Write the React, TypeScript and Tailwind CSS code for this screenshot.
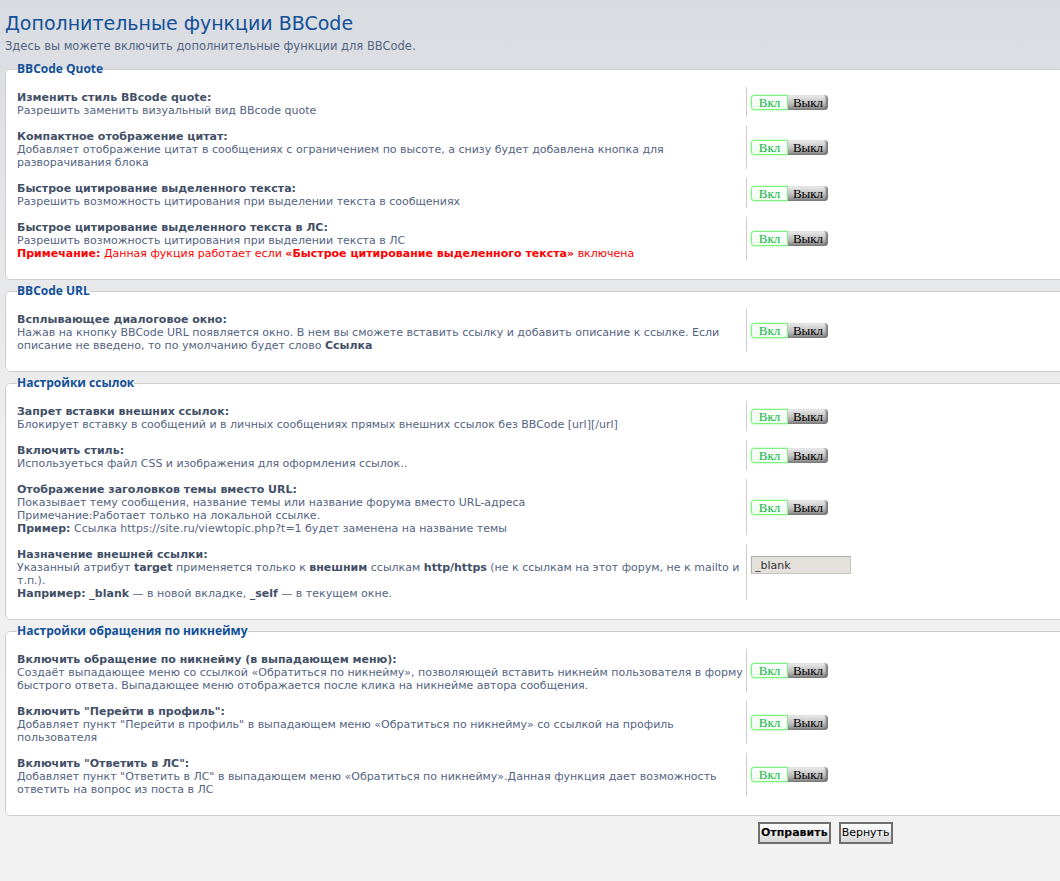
import React from "react";

type Row = {
  title: React.ReactNode;
  desc: React.ReactNode;
  control?: "toggle" | "input";
};

function Toggle() {
  return (
    <div className="flex h-[15px] font-['Liberation_Serif',serif] text-[13px] leading-[13px]">
      <span className="flex w-[37px] items-center justify-center rounded-l-[3px] border border-[#80f080] bg-gradient-to-b from-white to-[#eefff0] text-[#12b545] shadow-[0_0_2px_#6ef56e]">
        Вкл
      </span>
      <span className="flex w-[40px] items-center justify-center rounded-r-[4px] bg-gradient-to-b from-[#ededed] via-[#c4c4c4] to-[#858585] text-black shadow-[inset_-2px_-1px_2px_#777]">
        Выкл
      </span>
    </div>
  );
}

function Section({ legend, rows }: { legend: string; rows: Row[] }) {
  return (
    <fieldset className="mb-[4px] rounded-[5px] border border-[#cccccc] bg-white px-[11px] pt-[11px] pb-[10px]">
      <legend className="font-['Open_Sans',sans-serif] text-[12px] leading-[14px] font-bold text-[#115098]">
        {legend}
      </legend>
      {rows.map((r, i) => (
        <div key={i} className="mb-[9px] flex">
          <div className="w-[729px] pt-[4px] text-[11px] leading-[13px] text-[#536482]">
            <div className="font-bold text-[#425067]">{r.title}</div>
            <div>{r.desc}</div>
          </div>
          <div className="flex items-center border-l border-[#cccccc] pl-[4px]">
            {r.control === "input" ? (
              <input
                readOnly
                value="_blank"
                className="mb-[14px] h-[18px] w-[100px] border border-[#c7c4bd] border-t-[#b3b0a9] border-l-[#b3b0a9] bg-[#e4e0da] px-[3px] text-[11px] text-[#333]"
              />
            ) : (
              <Toggle />
            )}
          </div>
        </div>
      ))}
    </fieldset>
  );
}

export default function App() {
  const quote: Row[] = [
    { title: "Изменить стиль BBcode quote:", desc: "Разрешить заменить визуальный вид BBcode quote" },
    {
      title: "Компактное отображение цитат:",
      desc: "Добавляет отображение цитат в сообщениях с ограничением по высоте, а снизу будет добавлена кнопка для разворачивания блока",
    },
    { title: "Быстрое цитирование выделенного текста:", desc: "Разрешить возможность цитирования при выделении текста в сообщениях" },
    {
      title: "Быстрое цитирование выделенного текста в ЛС:",
      desc: (
        <>
          Разрешить возможность цитирования при выделении текста в ЛС
          <br />
          <span className="text-[#ff0000]">
            <b>Примечание:</b> Данная фукция работает если <b>«Быстрое цитирование выделенного текста»</b> включена
          </span>
        </>
      ),
    },
  ];

  const url: Row[] = [
    {
      title: "Всплывающее диалоговое окно:",
      desc: (
        <>
          Нажав на кнопку BBCode URL появляется окно. В нем вы сможете вставить ссылку и добавить описание к ссылке. Если
          описание не введено, то по умолчанию будет слово <b className="text-[#425067]">Ссылка</b>
        </>
      ),
    },
  ];

  const links: Row[] = [
    {
      title: "Запрет вставки внешних ссылок:",
      desc: "Блокирует вставку в сообщений и в личных сообщениях прямых внешних ссылок без BBCode [url][/url]",
    },
    { title: "Включить стиль:", desc: "Используеться файл CSS и изображения для оформления ссылок.." },
    {
      title: "Отображение заголовков темы вместо URL:",
      desc: (
        <>
          Показывает тему сообщения, название темы или название форума вместо URL-адреса
          <br />
          Примечание:Работает только на локальной ссылке.
          <br />
          <b className="text-[#425067]">Пример:</b> Ссылка https://site.ru/viewtopic.php?t=1 будет заменена на название темы
        </>
      ),
    },
    {
      title: "Назначение внешней ссылки:",
      control: "input",
      desc: (
        <>
          Указанный атрибут <b className="text-[#425067]">target</b> применяется только к{" "}
          <b className="text-[#425067]">внешним</b> ссылкам <b className="text-[#425067]">http/https</b> (не к ссылкам на
          этот форум, не к mailto и т.п.).
          <br />
          <b className="text-[#425067]">Например: _blank</b> — в новой вкладке, <b className="text-[#425067]">_self</b> — в
          текущем окне.
        </>
      ),
    },
  ];

  const nick: Row[] = [
    {
      title: "Включить обращение по никнейму (в выпадающем меню):",
      desc: "Создаёт выпадающее меню со ссылкой «Обратиться по никнейму», позволяющей вставить никнейм пользователя в форму быстрого ответа. Выпадающее меню отображается после клика на никнейме автора сообщения.",
    },
    {
      title: 'Включить "Перейти в профиль":',
      desc: 'Добавляет пункт "Перейти в профиль" в выпадающем меню «Обратиться по никнейму» со ссылкой на профиль пользователя',
    },
    {
      title: 'Включить "Ответить в ЛС":',
      desc: 'Добавляет пункт "Ответить в ЛС" в выпадающем меню «Обратиться по никнейму».Данная функция дает возможность ответить на вопрос из поста в ЛС',
    },
  ];

  return (
    <div className="min-h-[881px] overflow-hidden bg-[linear-gradient(to_bottom,#d8dbe0_0px,#e4e5e8_200px,#efefef_450px,#f2f2f2_881px)] font-['DejaVu_Sans',Verdana,sans-serif]">
      <div className="w-[1080px] pl-[5px]">
        <h1 className="pt-[10px] text-[19px] leading-[26px] text-[#115098]">Дополнительные функции BBCode</h1>
        <p className="mt-[2px] mb-[8px] text-[11.5px] leading-[16px] text-[#536482]">
          Здесь вы можете включить дополнительные функции для BBCode.
        </p>
        <Section legend="BBCode Quote" rows={quote} />
        <Section legend="BBCode URL" rows={url} />
        <Section legend="Настройки ссылок" rows={links} />
        <Section legend="Настройки обращения по никнейму" rows={nick} />
        <div className="flex gap-[8px] pl-[753px] pt-[2px]">
          <button className="h-[22px] border-2 border-[#6f6f6f] bg-gradient-to-b from-white to-[#d6d6d6] px-[1px] text-[11px] font-bold text-black">
            Отправить
          </button>
          <button className="h-[22px] border-2 border-[#6f6f6f] bg-gradient-to-b from-white to-[#d6d6d6] px-[1px] text-[11px] text-black">
            Вернуть
          </button>
        </div>
      </div>
    </div>
  );
}
